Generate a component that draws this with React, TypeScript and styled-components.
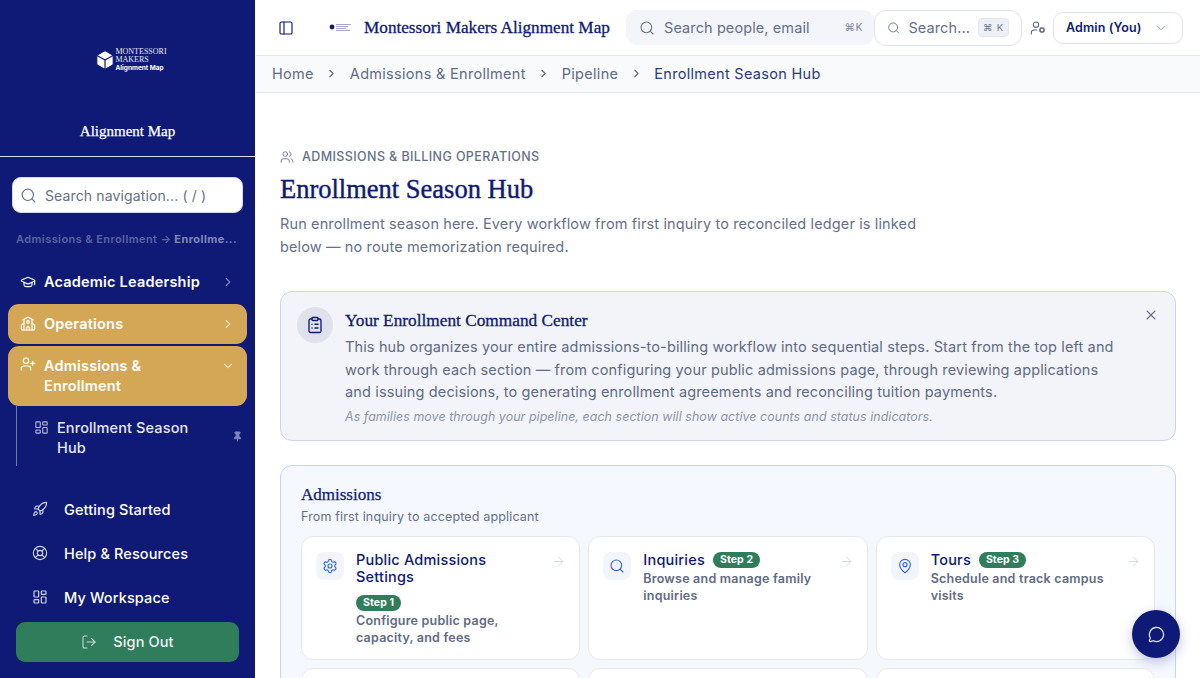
import React from "react";
import styled, { createGlobalStyle } from "styled-components";
import {
  ArrowRight, Box, ChevronDown, ChevronRight, ClipboardList, GraduationCap, LayoutDashboard,
  LifeBuoy, LogOut, MapPin, MessageCircle, PanelLeft, Pin, Rocket, School, Search, Settings,
  UserCog, UserPlus, Users, X,
} from "lucide-react";

const NAVY = "#0e1a75";
const SANS = `Inter, "Liberation Sans", sans-serif`;
const SERIF = `"Liberation Serif", serif`;

const Global = createGlobalStyle`
  html, body { margin: 0; padding: 0; height: 100%; overflow: hidden; background: #fff; }
  body { font-family: ${SANS}; }
  * { box-sizing: border-box; }
`;

const Shell = styled.div`display: flex; height: 678px; overflow: hidden; position: relative;`;

const Sidebar = styled.aside`
  width: 256px; flex: none; background: ${NAVY}; color: #fff; display: flex; flex-direction: column; border-right: 1px solid #fff;
`;
const Brand = styled.div`
  height: 157px; border-bottom: 1px solid #d9dcec; display: flex; flex-direction: column; align-items: center; padding-top: 47px;
`;
const BrandLogo = styled.div`display: flex; align-items: center; gap: 0; height: 26px; margin-left: 6px;`;
const BrandWords = styled.div`display: flex; flex-direction: column; margin-left: -1px; font-family: ${SERIF}; font-size: 8px; line-height: 8px; color: #e6e8f4;`;
const BrandSub = styled.span`font-family: ${SANS}; font-weight: 700; font-size: 6.5px; line-height: 8px; color: #fff;`;
const BrandName = styled.div`margin-top: 48px; font-family: ${SERIF}; font-size: 15px; font-weight: 400; -webkit-text-stroke: 0.25px #fff; line-height: 20px;`;
const NavSearch = styled.div`
  margin: 20px 12px 0; height: 36px; background: #fff; border-radius: 9px; display: flex; align-items: center; gap: 8px; padding: 0 7px;
  color: #64708a; font-size: 14px; letter-spacing: 0.13px; border: 1px solid #d5d9e8;
`;
const Trail = styled.div`
  margin-top: 18px; padding: 0 16px; height: 16px; display: flex; align-items: center; gap: 3px; font-size: 11px; font-weight: 600; line-height: 16px; color: #5a64a3; white-space: nowrap; letter-spacing: 0.42px;
`;
const TrailEnd = styled.span`color: #8088bd; font-weight: 700;`;
const Group = styled.nav`margin-top: 15px; padding: 0 8px; display: flex; flex-direction: column; gap: 2px;`;
const Item = styled.div<{ $active?: boolean; $tall?: boolean }>`
  display: flex; align-items: ${(p) => (p.$tall ? "flex-start" : "center")};
  height: ${(p) => (p.$tall ? 60 : 40)}px; padding: ${(p) => (p.$tall ? "10px" : "0")} 12px;
  gap: 8px; border-radius: ${(p) => (p.$active ? 11 : 0)}px;
  background: ${(p) => (p.$active ? "#d4a757" : "transparent")};
  font-size: 14.5px; font-weight: 600; line-height: 20px; letter-spacing: 0.2px;
  svg { flex: none; }
`;
const ItemText = styled.span`flex: 1;`;
const Chevron = styled.span<{ $dim?: boolean; $down?: boolean }>`
  display: flex; width: 14px; margin-top: ${(p) => (p.$down ? 3 : 0)}px; color: ${(p) => (p.$dim ? "#7f86bb" : "#f0dcb4")};
`;
const Sub = styled.div`
  margin: -2px 0 0 8px; height: 60px; border-left: 1px solid #7079ad; display: flex; align-items: flex-start; padding: 12px 4px 0 17px; gap: 8px; font-size: 14.5px; font-weight: 500; line-height: 20px; color: #e6e8f4; letter-spacing: 0.12px;
`;
const SubIcon = styled.span`display: flex; margin-top: 2px; color: #b4b9d8;`;
const PinBox = styled.span`display: flex; margin-top: 13px; color: #7f86bb;`;
const Lower = styled.div`margin-top: 22px; display: flex; flex-direction: column;`;
const LowerItem = styled.div`
  height: 44px; padding: 0 0 2px 32px; display: flex; align-items: center; gap: 16px; font-size: 14.5px; font-weight: 500; letter-spacing: 0.12px;
  svg { color: #cfd3e8; flex: none; }
`;
const SignOut = styled.div`
  margin: 2px 16px 0; height: 40px; padding-bottom: 1px; border-radius: 9px; background: #2f7d5b; display: flex; align-items: center; justify-content: center; gap: 16px; font-size: 14.5px; font-weight: 500; letter-spacing: 0.12px; color: #f1f5f3;
  svg { color: #ced9d6; }
`;

const Main = styled.main`flex: 1; min-width: 0; display: flex; flex-direction: column;`;
const TopBar = styled.header`
  height: 56px; flex: none; border-bottom: 1px solid #e2e6ee; display: flex; align-items: center; padding: 0 16px 0 22px; color: ${NAVY};
`;
const TinyLogo = styled.svg`margin-left: 35px; flex: none;`;
const AppTitle = styled.div`margin-left: 11px; width: 262px; font-family: ${SERIF}; font-size: 17.2px; font-weight: 400; -webkit-text-stroke: 0.3px ${NAVY}; color: ${NAVY}; white-space: nowrap;`;
const PeopleSearch = styled.div`
  width: 248px; height: 35px; background: #f3f5fa; border-radius: 11px; display: flex; align-items: center; padding: 0 11px 0 13px; gap: 9px; color: #64708a; font-size: 14.5px; letter-spacing: 0.1px;
`;
const Hint = styled.span`margin-left: auto; font-size: 10.5px; color: #7d879c; letter-spacing: 0.5px;`;
const GlobalSearch = styled.div`
  width: 148px; height: 36px; border: 1px solid #e1e4ef; border-radius: 12px; display: flex; align-items: center; padding: 0 12px; gap: 8px; color: #64708a; font-size: 14.5px; background: #fff; letter-spacing: 0.1px; white-space: nowrap;
`;
const Kbd = styled.span`
  margin-left: auto; flex: none; width: 31px; height: 19px; background: #eef0f7; border: 1px solid #e3e6f0; border-radius: 4px; display: flex; align-items: center; justify-content: center; font-size: 9.5px; color: #6c7790; letter-spacing: 0.8px;
`;
const RoleIcon = styled.span`display: flex; margin-left: 8px; color: #5b6780;`;
const RoleSelect = styled.div`
  margin-left: 7px; width: 130px; height: 32px; border: 1px solid #e1e4ef; border-radius: 10px; display: flex; align-items: center; padding: 0 14px 0 12px; font-size: 12.5px; font-weight: 600; color: ${NAVY}; letter-spacing: 0.1px; justify-content: space-between;
  svg { color: #8e97aa; }
`;
const Crumbs = styled.div`
  height: 37px; flex: none; background: #f8fafc; border-bottom: 1px solid #e2e6ee; padding: 0 16px 2px; display: flex; align-items: center; gap: 10px; font-size: 14.5px; color: #5f6b84; letter-spacing: 0.3px; font-weight: 400;
  svg { color: #5f6b84; margin: 0 1.5px; }
`;
const CrumbNow = styled.span`color: #2a3a78;`;
const Content = styled.div`flex: 1; min-height: 0; overflow: hidden; padding: 55px 24px 0;`;
const Eyebrow = styled.div`
  display: flex; align-items: center; gap: 8px; font-size: 12.5px; font-weight: 500; color: #64708a; text-transform: uppercase; letter-spacing: 0.4px; line-height: 18px;
  svg { color: #64708a; flex: none; }
`;
const Title = styled.h1`margin: 6px 0 0; font-family: ${SERIF}; font-weight: 400; -webkit-text-stroke: 0.4px ${NAVY}; font-size: 26.5px; line-height: 34px; color: ${NAVY};`;
const Lede = styled.p`margin: 6px 0 0; font-size: 14.5px; line-height: 23px; color: #64708a; letter-spacing: 0.13px; white-space: pre-line;`;
const Callout = styled.section`
  margin-top: 33px; height: 150px; border: 1px solid #cfd3e5; border-radius: 12px; background: #f2f4f9; padding: 15px 16px; display: flex; gap: 12px; position: relative;
`;
const CalloutIcon = styled.div`
  width: 36px; height: 36px; flex: none; border-radius: 50%; background: #dfe2ec; display: flex; align-items: center; justify-content: center; color: ${NAVY};
`;
const CalloutBody = styled.div`flex: 1; min-width: 0;`;
const CalloutTitle = styled.h2`margin: 3px 0 0; font-family: ${SERIF}; font-size: 17.3px; font-weight: 400; -webkit-text-stroke: 0.3px ${NAVY}; line-height: 22px; color: ${NAVY};`;
const CalloutText = styled.p`margin: 4px 0 0; font-size: 14.5px; line-height: 22.5px; color: #5f6b84; letter-spacing: 0.14px; white-space: pre-line;`;
const CalloutNote = styled.p`margin: 5px 0 0; font-size: 12.4px; line-height: 16px; font-style: italic; color: #8a94ab; letter-spacing: 0.08px;`;
const Close = styled.span`position: absolute; top: 15px; right: 16px; display: flex; color: #64708a;`;
const Section = styled.section`
  margin-top: 24px; border: 1px solid #c3d4fb; border-radius: 12px; background: #f5f8ff; padding: 19px 20px 20px;
`;
const SectionTitle = styled.h3`margin: 0; font-family: ${SERIF}; font-size: 17px; font-weight: 400; -webkit-text-stroke: 0.25px ${NAVY}; line-height: 20px; color: ${NAVY};`;
const SectionSub = styled.p`margin: 3px 0 0; font-size: 12.5px; line-height: 18px; color: #64708a; letter-spacing: 0.15px;`;
const Cards = styled.div`margin-top: 10px; display: grid; grid-template-columns: repeat(3, 1fr); gap: 8px;`;
const Card = styled.article`
  height: 124px; background: #fff; border: 1px solid #e5e8f2; border-radius: 12px; padding: 14px 14px; display: flex; gap: 12px; position: relative;
`;
const CardIcon = styled.div`
  width: 28px; height: 28px; margin-top: 1px; flex: none; border-radius: 8px; background: #f3f5fb; display: flex; align-items: center; justify-content: center; color: #2f66f0;
`;
const CardBody = styled.div`flex: 1; min-width: 0; padding-right: 24px;`;
const CardHead = styled.div`display: flex; align-items: center; flex-wrap: wrap; gap: 2px 8px;`;
const CardName = styled.span`font-size: 14.5px; font-weight: 500; line-height: 17px; color: ${NAVY}; letter-spacing: 0.2px;`;
const Step = styled.span`
  height: 16px; padding: 0 7px; border-radius: 8px; background: #2f7d5b; color: #fff; font-size: 10.5px; font-weight: 700; line-height: 16px; letter-spacing: 0.1px; white-space: nowrap; display: inline-block;
`;
const BlockStep = styled(Step)`display: block; width: fit-content; margin-top: 10px;`;
const CardDesc = styled.p<{ $gap: number }>`margin: ${(p) => p.$gap}px 0 0; font-size: 12.5px; font-weight: 600; line-height: 16.5px; color: #5f6b84; letter-spacing: 0.22px;`;
const CardArrow = styled.span`position: absolute; top: 17px; right: 13px; display: flex; color: #d3d7e4;`;
const Chat = styled.button`
  position: absolute; right: 20px; bottom: 20px; width: 48px; height: 48px; border-radius: 50%; border: none; background: ${NAVY}; color: #dfe2f0; display: flex; align-items: center; justify-content: center; box-shadow: 0 4px 12px rgba(14, 26, 117, 0.25);
`;

export default function App() {
  return (
    <>
      <Global />
      <Shell>
        <Sidebar>
          <Brand>
            <BrandLogo>
              <Box size={22} fill="#fff" color="#0e1a75" strokeWidth={1.3} />
              <BrandWords>
                <span>MONTESSORI</span>
                <span>MAKERS</span>
                <BrandSub>Alignment Map</BrandSub>
              </BrandWords>
            </BrandLogo>
            <BrandName>Alignment Map</BrandName>
          </Brand>
          <NavSearch>
            <Search size={17} strokeWidth={1.6} />
            Search navigation... ( / )
          </NavSearch>
          <Trail>
            Admissions &amp; Enrollment <span>→</span> <TrailEnd>Enrollme...</TrailEnd>
          </Trail>
          <Group>
            <Item>
              <GraduationCap size={16} strokeWidth={1.7} />
              <ItemText>Academic Leadership</ItemText>
              <Chevron $dim><ChevronRight size={14} /></Chevron>
            </Item>
            <Item $active>
              <School size={16} strokeWidth={1.7} />
              <ItemText>Operations</ItemText>
              <Chevron><ChevronRight size={14} /></Chevron>
            </Item>
            <Item $active $tall>
              <UserPlus size={16} strokeWidth={1.7} />
              <ItemText>Admissions &amp;<br />Enrollment</ItemText>
              <Chevron $down><ChevronDown size={14} /></Chevron>
            </Item>
            <Sub>
              <SubIcon><LayoutDashboard size={15} strokeWidth={1.8} /></SubIcon>
              <ItemText>Enrollment Season<br />Hub</ItemText>
              <PinBox><Pin size={11} fill="currentColor" /></PinBox>
            </Sub>
          </Group>
          <Lower>
            <LowerItem><Rocket size={16} strokeWidth={1.7} />Getting Started</LowerItem>
            <LowerItem><LifeBuoy size={16} strokeWidth={1.7} />Help &amp; Resources</LowerItem>
            <LowerItem><LayoutDashboard size={16} strokeWidth={1.8} />My Workspace</LowerItem>
          </Lower>
          <SignOut><LogOut size={16} strokeWidth={1.6} />Sign Out</SignOut>
        </Sidebar>
        <Main>
          <TopBar>
            <PanelLeft size={16} strokeWidth={1.7} />
            <TinyLogo width="24" height="10" viewBox="0 0 24 10">
              <circle cx="3" cy="4" r="2.4" fill="#0e1a75" />
              <path d="M7 1.5h15M7 3.5h12M7 5.5h10M7 7.5h14" stroke="#9aa1c4" strokeWidth="0.9" />
            </TinyLogo>
            <AppTitle>Montessori Makers Alignment Map</AppTitle>
            <PeopleSearch>
              <Search size={16} strokeWidth={1.6} />
              Search people, email
              <Hint>⌘K</Hint>
            </PeopleSearch>
            <GlobalSearch>
              <Search size={16} strokeWidth={1.6} />
              Search...
              <Kbd>⌘ K</Kbd>
            </GlobalSearch>
            <RoleIcon><UserCog size={16} strokeWidth={1.6} /></RoleIcon>
            <RoleSelect>Admin (You)<ChevronDown size={14} strokeWidth={1.6} /></RoleSelect>
          </TopBar>
          <Crumbs>
            <span>Home</span><ChevronRight size={13} />
            <span>Admissions &amp; Enrollment</span><ChevronRight size={13} />
            <span>Pipeline</span><ChevronRight size={13} />
            <CrumbNow>Enrollment Season Hub</CrumbNow>
          </Crumbs>
          <Content>
            <Eyebrow><Users size={14} strokeWidth={1.5} />Admissions &amp; Billing Operations</Eyebrow>
            <Title>Enrollment Season Hub</Title>
            <Lede>{"Run enrollment season here. Every workflow from first inquiry to reconciled ledger is linked\nbelow — no route memorization required."}</Lede>
            <Callout>
              <CalloutIcon><ClipboardList size={18} strokeWidth={1.8} /></CalloutIcon>
              <CalloutBody>
                <CalloutTitle>Your Enrollment Command Center</CalloutTitle>
                <CalloutText>{"This hub organizes your entire admissions-to-billing workflow into sequential steps. Start from the top left and\nwork through each section — from configuring your public admissions page, through reviewing applications\nand issuing decisions, to generating enrollment agreements and reconciling tuition payments."}</CalloutText>
                <CalloutNote>As families move through your pipeline, each section will show active counts and status indicators.</CalloutNote>
              </CalloutBody>
              <Close><X size={16} strokeWidth={1.6} /></Close>
            </Callout>
            <Section>
              <SectionTitle>Admissions</SectionTitle>
              <SectionSub>From first inquiry to accepted applicant</SectionSub>
              <Cards>
                <Card>
                  <CardIcon><Settings size={16} strokeWidth={1.7} /></CardIcon>
                  <CardBody>
                    <CardHead><CardName>Public Admissions Settings</CardName></CardHead>
                    <BlockStep>Step 1</BlockStep>
                    <CardDesc $gap={2}>Configure public page, capacity, and fees</CardDesc>
                  </CardBody>
                  <CardArrow><ArrowRight size={15} strokeWidth={1.5} /></CardArrow>
                </Card>
                <Card>
                  <CardIcon><Search size={16} strokeWidth={1.7} /></CardIcon>
                  <CardBody>
                    <CardHead><CardName>Inquiries</CardName><Step>Step 2</Step></CardHead>
                    <CardDesc $gap={3}>Browse and manage family inquiries</CardDesc>
                  </CardBody>
                  <CardArrow><ArrowRight size={15} strokeWidth={1.5} /></CardArrow>
                </Card>
                <Card>
                  <CardIcon><MapPin size={16} strokeWidth={1.7} /></CardIcon>
                  <CardBody>
                    <CardHead><CardName>Tours</CardName><Step>Step 3</Step></CardHead>
                    <CardDesc $gap={3}>Schedule and track campus visits</CardDesc>
                  </CardBody>
                  <CardArrow><ArrowRight size={15} strokeWidth={1.5} /></CardArrow>
                </Card>
                <Card /><Card /><Card />
              </Cards>
            </Section>
          </Content>
        </Main>
        <Chat aria-label="Open chat"><MessageCircle size={17} strokeWidth={1.8} /></Chat>
      </Shell>
    </>
  );
}
